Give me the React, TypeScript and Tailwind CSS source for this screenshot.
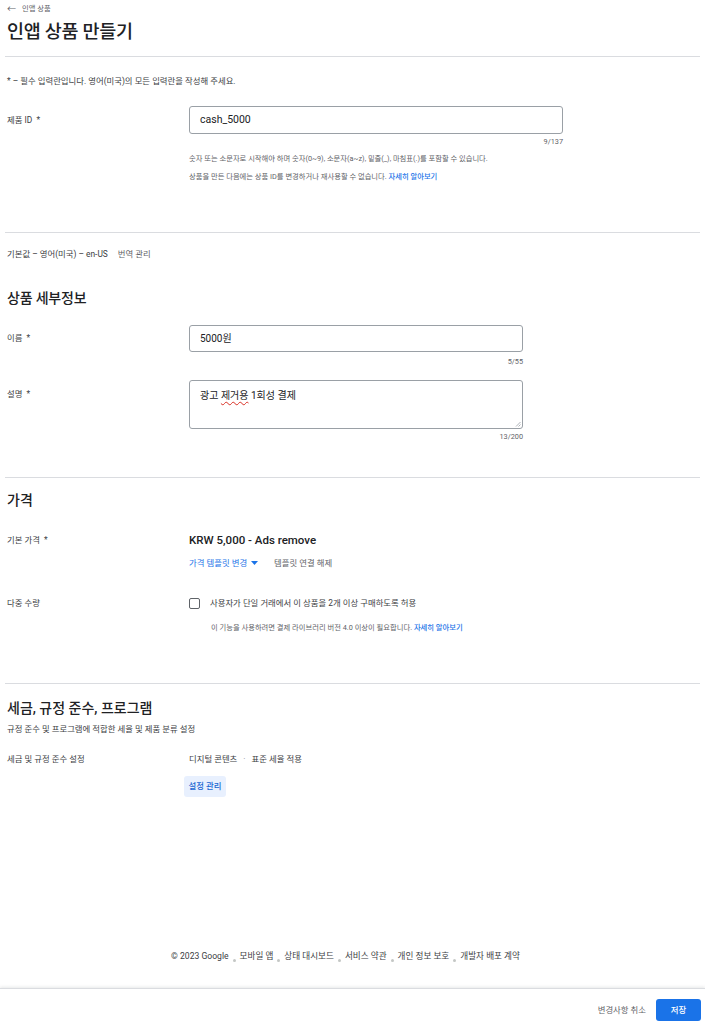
import React from "react";

const font = { fontFamily: 'Roboto, "Noto Sans CJK KR", sans-serif' };

function Divider({ className = "" }: { className?: string }) {
  return <div className={`mx-[5px] h-px bg-[#dadce0] ${className}`} />;
}

function Row({ label, children, className = "" }: { label: string; children: React.ReactNode; className?: string }) {
  return (
    <div className={`grid grid-cols-[182px_1fr] ${className}`}>
      <div className="text-[8.4px] leading-[12px] text-[#3c4043]">{label}</div>
      <div>{children}</div>
    </div>
  );
}

function FooterDot() {
  return <span className="mx-[4px] inline-block h-[3px] w-[3px] rounded-full bg-[#c4c7c5] align-baseline" />;
}

export default function App() {
  const footerLinks = ["모바일 앱", "상태 대시보드", "서비스 약관", "개인 정보 보호", "개발자 배포 계약"];

  return (
    <div style={font} className="flex h-[1024px] flex-col bg-white text-[#202124]">
      <div className="px-[7px] pt-[4px]">
        <div className="flex items-center gap-[6px] text-[7.3px] leading-[10px] text-[#5f6368]">
          <span className="text-[9px]">←</span>
          <span>인앱 상품</span>
        </div>
        <h1 className="mt-[6px] text-[18.5px] font-medium leading-[24px] tracking-[-0.3px]">인앱 상품 만들기</h1>
      </div>
      <Divider className="mt-[12px]" />

      <div className="px-[7px]">
        <p className="mt-[18px] text-[8.4px] leading-[12px] text-[#3c4043]">
          * – 필수 입력란입니다. 영어(미국)의 모든 입력란을 작성해 주세요.
        </p>

        <div className="mt-[19px] grid grid-cols-[182px_1fr]">
          <div className="flex h-[28px] items-center text-[8.4px] text-[#3c4043]">제품 ID&nbsp;&nbsp;*</div>
          <div>
            <div className="w-[374px]">
              <div className="flex h-[28px] items-center rounded-[3px] border border-[#9aa0a6] px-[10px] text-[10.5px] text-[#202124]">
                cash_5000
              </div>
              <div className="mt-[3px] text-right text-[7.3px] leading-[10px] text-[#5f6368]">9/137</div>
            </div>
            <p className="mt-[7px] text-[7.3px] leading-[10px] text-[#5f6368]">
              숫자 또는 소문자로 시작해야 하며 숫자(0~9), 소문자(a~z), 밑줄(_), 마침표(.)를 포함할 수 있습니다.
            </p>
            <p className="mt-[8px] text-[7.3px] leading-[10px] text-[#5f6368]">
              상품을 만든 다음에는 상품 ID를 변경하거나 재사용할 수 없습니다.{" "}
              <span className="font-medium text-[#1a73e8]">자세히 알아보기</span>
            </p>
          </div>
        </div>
      </div>

      <Divider className="mt-[50px]" />

      <div className="px-[7px]">
        <div className="mt-[15px] flex gap-[10px] text-[8.4px] leading-[12px]">
          <span className="text-[#3c4043]">기본값 – 영어(미국) – en-US</span>
          <span className="text-[#5f6368]">번역 관리</span>
        </div>

        <h2 className="mt-[28px] text-[14px] font-medium leading-[20px] tracking-[-0.2px]">상품 세부정보</h2>

        <div className="mt-[17px] grid grid-cols-[182px_1fr]">
          <div className="flex h-[27px] items-center text-[8.4px] text-[#3c4043]">이름&nbsp;&nbsp;*</div>
          <div className="w-[334px]">
            <div className="flex h-[27px] items-center rounded-[3px] border border-[#9aa0a6] px-[10px] text-[10px] text-[#202124]">
              5000원
            </div>
            <div className="mt-[5px] text-right text-[7.3px] leading-[10px] text-[#5f6368]">5/55</div>
          </div>
        </div>

        <div className="mt-[13px] grid grid-cols-[182px_1fr]">
          <div className="pt-[8px] text-[8.4px] leading-[12px] text-[#3c4043]">설명&nbsp;&nbsp;*</div>
          <div className="w-[334px]">
            <div className="relative h-[49px] rounded-[3px] border border-[#9aa0a6] px-[10px] pt-[8px] text-[10px] leading-[14px] text-[#202124]">
              광고 <span className="underline decoration-[#d93025] decoration-wavy decoration-[1px] underline-offset-2">제거용</span> 1회성 결제
              <svg className="absolute bottom-[1px] right-[1px]" width="6" height="6" viewBox="0 0 6 6">
                <path d="M5.5 1 L1 5.5 M5.5 3.5 L3.5 5.5" stroke="#9aa0a6" strokeWidth="0.8" />
              </svg>
            </div>
            <div className="mt-[3px] text-right text-[7.3px] leading-[10px] text-[#5f6368]">13/200</div>
          </div>
        </div>
      </div>

      <Divider className="mt-[35px]" />

      <div className="px-[7px]">
        <h2 className="mt-[12px] text-[14px] font-medium leading-[20px]">가격</h2>

        <div className="mt-[22px] grid grid-cols-[182px_1fr]">
          <div className="flex h-[16px] items-center text-[8.4px] text-[#3c4043]">기본 가격&nbsp;&nbsp;*</div>
          <div>
            <div className="text-[11.5px] font-medium leading-[16px] text-[#202124]">KRW 5,000 - Ads remove</div>
            <div className="mt-[9px] flex items-center text-[8.4px] leading-[12px]">
              <span className="text-[#1a73e8]">가격 템플릿 변경</span>
              <svg className="ml-[4px]" width="7" height="4" viewBox="0 0 7 4">
                <path d="M0 0 L7 0 L3.5 4 Z" fill="#1a73e8" />
              </svg>
              <span className="ml-[16px] text-[#5f6368]">템플릿 연결 해제</span>
            </div>
          </div>
        </div>

        <div className="mt-[27px] grid grid-cols-[182px_1fr]">
          <div className="flex h-[14px] items-center text-[8.4px] text-[#3c4043]">다중 수량</div>
          <div>
            <div className="flex h-[14px] items-center gap-[10px] text-[8.4px] text-[#3c4043]">
              <span className="inline-block h-[11px] w-[11px] rounded-[2px] border-[1.5px] border-[#5f6368]" />
              <span>사용자가 단일 거래에서 이 상품을 2개 이상 구매하도록 허용</span>
            </div>
            <p className="ml-[22px] mt-[13px] text-[7.3px] leading-[10px] text-[#5f6368]">
              이 기능을 사용하려면 결제 라이브러리 버전 4.0 이상이 필요합니다.{" "}
              <span className="font-medium text-[#1a73e8]">자세히 알아보기</span>
            </p>
          </div>
        </div>
      </div>

      <Divider className="mt-[50px]" />

      <div className="px-[7px]">
        <h2 className="mt-[14px] text-[14px] font-medium leading-[20px]">세금, 규정 준수, 프로그램</h2>
        <p className="mt-[5px] text-[8.4px] leading-[12px] text-[#3c4043]">규정 준수 및 프로그램에 적합한 세율 및 제품 분류 설정</p>

        <Row label="세금 및 규정 준수 설정" className="mt-[18px]">
          <div className="flex items-center text-[8.4px] leading-[12px] text-[#3c4043]">
            <span>디지털 콘텐츠</span>
            <span className="mx-[6px] text-[#9aa0a6]">·</span>
            <span>표준 세율 적용</span>
          </div>
          <button className="-ml-[5px] mt-[11px] flex h-[21px] w-[42px] items-center justify-center rounded-[3px] bg-[#e8f0fe] text-[8.4px] font-medium text-[#1967d2]">
            설정 관리
          </button>
        </Row>
      </div>

      <div className="flex-1" />

      <div className="flex items-end justify-center pr-[14px] text-[8.6px] leading-[12px] text-[#3c4043]">
        <span>© 2023 Google</span>
        {footerLinks.map((l) => (
          <React.Fragment key={l}>
            <FooterDot />
            <span>{l}</span>
          </React.Fragment>
        ))}
      </div>

      <div className="mt-[26px] flex h-[36px] items-start justify-end gap-[10px] border-t border-[#dadce0] pr-[4px] pt-[10px] shadow-[0_-1px_3px_rgba(60,64,67,0.12)]">
        <button className="flex h-[22px] items-center text-[8.4px] text-[#5f6368]">변경사항 취소</button>
        <button className="flex h-[22px] w-[45px] items-center justify-center rounded-[3px] bg-[#1a73e8] text-[8.4px] font-medium text-white">
          저장
        </button>
      </div>
    </div>
  );
}
